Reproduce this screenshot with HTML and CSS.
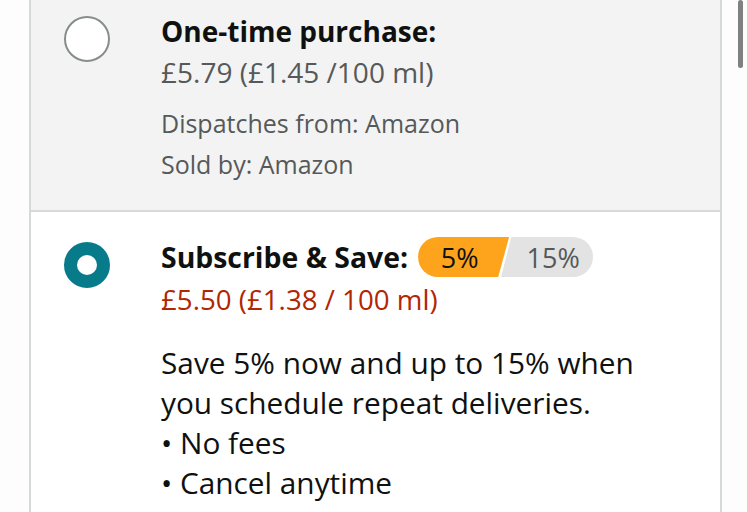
FILE: index.html
```html
<!DOCTYPE html>
<html>
<head>
<meta charset="utf-8">
<link rel="stylesheet" href="styles.css">
</head>
<body>
<div class="page">
  <div class="card">
    <div class="option option-off">
      <div class="radio-col"><span class="radio"></span></div>
      <div class="text-col">
        <div class="title">One-time purchase:</div>
        <div class="price-grey">£5.79 (£1.45 /100 ml)</div>
        <div class="meta">
          <div class="meta-line">Dispatches from: Amazon</div>
          <div class="meta-line">Sold by: Amazon</div>
        </div>
      </div>
    </div>
    <div class="option option-on">
      <div class="radio-col"><span class="radio radio-checked"></span></div>
      <div class="text-col">
        <div class="title-row">
          <span class="title title-sub">Subscribe &amp; Save:</span>
          <span class="badge">
            <span class="badge-a">5%</span>
            <span class="badge-b">15%</span>
          </span>
        </div>
        <div class="price-red">£5.50 (£1.38 / 100 ml)</div>
        <div class="desc">
          <div>Save 5% now and up to 15% when</div>
          <div>you schedule repeat deliveries.</div>
          <div>• No fees</div>
          <div>• Cancel anytime</div>
        </div>
      </div>
    </div>
  </div>
  <div class="scrollbar"></div>
</div>
</body>
</html>
```
FILE: styles.css
```css
html, body {
  margin: 0;
  padding: 0;
  background: #fdfdfd;
}
.page {
  position: relative;
  width: 747px;
  height: 512px;
  overflow: hidden;
  font-family: "Open Sans", "Liberation Sans", sans-serif;
}
.card {
  margin-left: 29px;
  width: 689px;
  height: 512px;
  border-left: 2px solid #d5d9d9;
  border-right: 2px solid #d5d9d9;
  background: #ffffff;
}
.option {
  display: flex;
}
.option-off {
  background: #f3f3f3;
  height: 210px;
  border-bottom: 2px solid #d5d9d9;
}
.radio-col {
  width: 130px;
  padding-left: 33px;
  box-sizing: border-box;
  flex-shrink: 0;
}
.radio {
  display: block;
  width: 46px;
  height: 46px;
  box-sizing: border-box;
  border-radius: 50%;
  border: 2px solid #888c8c;
  background: #ffffff;
  margin-top: 16px;
}
.radio-checked {
  border: 13.5px solid #087b8a;
  margin-top: 30px;
}
.text-col {
  display: flex;
  flex-direction: column;
}
.title {
  font-weight: 700;
  font-size: 28px;
  color: #0f1111;
  line-height: 40px;
  white-space: nowrap;
}
.title-sub {
  font-size: 28.4px;
}
.option-off .title {
  margin-top: 11px;
}
.price-grey {
  font-size: 28px;
  color: #565959;
  line-height: 40px;
  margin-top: 1px;
}
.meta {
  margin-top: 11px;
}
.meta-line {
  font-size: 25px;
  color: #565959;
  line-height: 41px;
}
.title-row {
  display: flex;
  align-items: center;
  gap: 10px;
  margin-top: 25px;
  height: 40px;
}
.badge {
  display: flex;
  height: 40px;
}
.badge-a {
  display: flex;
  align-items: center;
  justify-content: center;
  width: 91px;
  height: 40px;
  padding-right: 8px;
  box-sizing: border-box;
  background: #fea41c;
  color: #0f1111;
  font-size: 27px;
  border-radius: 20px 0 0 20px;
  clip-path: polygon(0 0, 100% 0, 88% 100%, 0 100%);
}
.badge-b {
  display: flex;
  align-items: center;
  justify-content: center;
  width: 92px;
  height: 40px;
  margin-left: -8px;
  padding-left: 12px;
  box-sizing: border-box;
  background: #e3e3e3;
  color: #565959;
  font-size: 27px;
  border-radius: 0 20px 20px 0;
  clip-path: polygon(11% 0, 100% 0, 100% 100%, 0 100%);
}
.price-red {
  font-size: 27.7px;
  color: #b12704;
  line-height: 40px;
  margin-top: 2px;
}
.desc {
  margin-top: 24px;
  font-size: 29.8px;
  color: #0f1111;
  line-height: 40px;
}
.scrollbar {
  position: absolute;
  left: 738px;
  top: 0;
  width: 5px;
  height: 68px;
  border-radius: 3px;
  background: #808080;
}
```
